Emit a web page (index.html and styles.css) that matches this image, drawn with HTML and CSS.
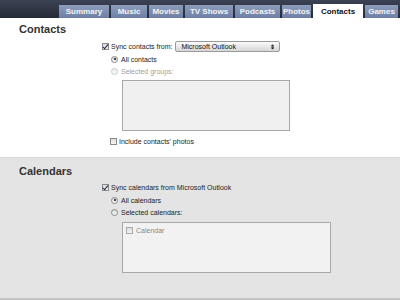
FILE: index.html
```html
<!DOCTYPE html>
<html lang="en">
<head>
    <meta charset="UTF-8">
    <title>Info - Contacts</title>
    <link rel="stylesheet" href="styles.css">
</head>
<body>
    <!-- Tab bar -->
    <div class="tabbar">
        <div class="tab t-summary">Summary</div>
        <div class="tab t-music">Music</div>
        <div class="tab t-movies">Movies</div>
        <div class="tab t-tv">TV Shows</div>
        <div class="tab t-podcasts">Podcasts</div>
        <div class="tab t-photos">Photos</div>
        <div class="tab t-contacts active">Contacts</div>
        <div class="tab t-games">Games</div>
    </div>

    <!-- Contacts -->
    <div class="section contacts">
        <h2>Contacts</h2>
        <div class="options">
            <div class="row sync">
                <span class="check on"></span>
                <span class="label">Sync contacts from:</span>
                <div class="select">
                    <span>Microsoft Outlook</span>
                    <span class="arrows">&#8661;</span>
                </div>
            </div>
            <div class="row sub">
                <span class="radio on"></span>
                <span class="label">All contacts</span>
            </div>
            <div class="row sub off">
                <span class="radio"></span>
                <span class="label">Selected groups:</span>
            </div>
            <div class="listbox groups"></div>
            <div class="row photos">
                <span class="check"></span>
                <span class="label">Include contacts' photos</span>
            </div>
        </div>
    </div>

    <!-- Calendars -->
    <div class="section calendars">
        <h2>Calendars</h2>
        <div class="options">
            <div class="row sync">
                <span class="check on"></span>
                <span class="label">Sync calendars from Microsoft Outlook</span>
            </div>
            <div class="row sub">
                <span class="radio on"></span>
                <span class="label">All calendars</span>
            </div>
            <div class="row sub">
                <span class="radio"></span>
                <span class="label">Selected calendars:</span>
            </div>
            <div class="listbox cals">
                <div class="row item">
                    <span class="check"></span>
                    <span class="label">Calendar</span>
                </div>
            </div>
        </div>
    </div>
</body>
</html>
```

FILE: styles.css
```css
* {
    box-sizing: border-box;
    margin: 0;
    padding: 0;
}

body {
    width: 400px;
    height: 300px;
    overflow: hidden;
    font-family: "Liberation Sans", Arial, sans-serif;
    font-size: 7px;
    color: #222;
    background: #e4e4e4;
}

/* Tab bar */
.tabbar {
    height: 18px;
    display: flex;
    align-items: flex-end;
    gap: 2px;
    padding-left: 59px;
    background: linear-gradient(#3b4253, #242a36);
}

.tab {
    height: 13px;
    display: flex;
    justify-content: center;
    align-items: center;
    font-size: 8px;
    font-weight: bold;
    color: #f2f4f8;
    background: linear-gradient(#8d9dbd, #6d80a4);
}

.t-summary { width: 50px; }
.t-music { width: 36px; }
.t-movies { width: 34px; }
.t-tv { width: 48px; }
.t-podcasts { width: 45px; }
.t-photos { width: 29px; }
.t-contacts { width: 50px; }
.t-games { width: 33px; }

.tab.active {
    height: 14px;
    background: #fff;
    color: #111;
}

/* Sections */
.section {
    padding: 5px 0 0 19px;
}

.section h2 {
    font-size: 11px;
    font-weight: bold;
    color: #333;
    height: 12px;
    line-height: 12px;
}

.contacts {
    height: 139px;
    background: #fff;
}

.calendars {
    padding-top: 7px;
    border-top: 1px solid #d8d8d8;
    border-bottom: 2px solid #c4c4c4;
    height: 143px;
}

.options {
    margin-left: 83px;
    display: flex;
    flex-direction: column;
}

.row {
    display: flex;
    align-items: center;
    height: 12px;
    gap: 2px;
}

.row.sync {
    margin-top: 5px;
    height: 13px;
}

.row.sub {
    margin-left: 9px;
    gap: 3px;
}

.row.off .label,
.row.off .radio {
    opacity: 0.45;
}

.row.photos {
    margin-top: 4px;
    margin-left: 8px;
}

.calendars .row.sync { margin-top: 4px; }
.calendars .row.sub { height: 12.5px; }

/* Controls */
.check {
    width: 7px;
    height: 7px;
    border: 1px solid #8a8a8a;
    background: linear-gradient(#dcdcdc, #f6f6f6);
    position: relative;
}

.check.on::after {
    content: "";
    position: absolute;
    left: 1px;
    top: -1px;
    width: 2px;
    height: 5px;
    border: solid #1d2a50;
    border-width: 0 1.5px 1.5px 0;
    transform: rotate(40deg);
}

.radio {
    width: 7px;
    height: 7px;
    border-radius: 50%;
    border: 1px solid #888;
    background: linear-gradient(#d8d8d8, #f8f8f8);
    position: relative;
}

.radio.on::after {
    content: "";
    position: absolute;
    left: 1.5px;
    top: 1.5px;
    width: 2px;
    height: 2px;
    border-radius: 50%;
    background: #111;
}

.select {
    margin-left: 1px;
    width: 105px;
    height: 11px;
    border: 1px solid #9a9a9a;
    border-radius: 2px;
    background: linear-gradient(#fbfbfb, #d6d6d6);
    display: flex;
    align-items: center;
    justify-content: space-between;
    padding: 0 4px 0 5px;
    font-size: 7px;
    color: #111;
}

.arrows {
    font-size: 6px;
    font-weight: bold;
}

.listbox {
    margin-left: 20px;
    border: 1px solid #a8a8a8;
    background: #f0f0f0;
}

.groups {
    margin-top: 3px;
    width: 168px;
    height: 51px;
}

.cals {
    margin-top: 3px;
    width: 209px;
    height: 51px;
    background: #f2f2f2;
    padding: 2px 0 0 3px;
}

.row.item {
    height: 11px;
    gap: 3px;
    color: #888;
}

.row.item .check {
    border-color: #aaa;
}
```
